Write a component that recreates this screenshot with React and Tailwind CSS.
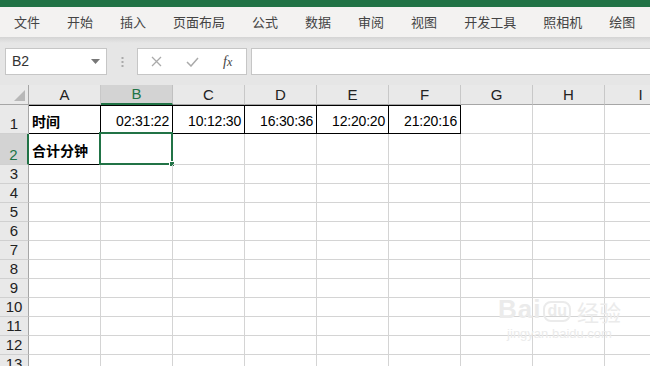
import React from 'react';

const menus = ['文件', '开始', '插入', '页面布局', '公式', '数据', '审阅', '视图', '开发工具', '照相机', '绘图'];
const cols = ['A', 'B', 'C', 'D', 'E', 'F', 'G', 'H', 'I'];
const times = ['02:31:22', '10:12:30', '16:30:36', '12:20:20', '21:20:16'];

// row heights in px (bottom gridline included)
const rowHeights = [29, 31, 19, 19, 19, 19, 19, 19, 19, 19, 19, 19, 19];

const cjk = { fontFamily: '"Noto Sans CJK SC", "Liberation Sans", sans-serif' };

const RowHeader = ({ n, h }) => {
  const sel = n === 2;
  return (
    <div
      className={`w-[29px] shrink-0 flex items-end justify-center border-b border-b-[#d0d0d0] border-r ${
        sel ? 'bg-[#d3d3d3] text-[#217346] border-r-[#217346] border-r-2' : 'bg-[#e9e9e9] text-[#222] border-r-[#a6a6a6]'
      } text-[15px] leading-[18px]`}
      style={{ height: h }}
    >
      {n}
    </div>
  );
};

const Cell = ({ r, c, h }) => {
  const boxed = (r === 1 && c <= 5) || (r === 2 && c === 0);
  let content = null;
  if (r === 1 && c === 0) content = <span className="font-bold text-[14px] pl-[3px]" style={cjk}>时间</span>;
  if (r === 2 && c === 0) content = <span className="font-bold text-[14px] pl-[3px]" style={cjk}>合计分钟</span>;
  if (r === 1 && c >= 1 && c <= 5) content = <span className="ml-auto pr-[3px] text-[14px] tracking-[-0.2px]">{times[c - 1]}</span>;
  return (
    <div
      className={`relative w-[72px] shrink-0 flex items-center pt-[3px] border-r border-b ${
        boxed ? 'border-black' : 'border-[#d4d4d4]'
      } ${r === 1 && c <= 5 ? 'border-t border-t-black' : ''}`}
      style={{ height: h }}
    >
      {content}
      {r === 2 && c === 1 && (
        <div className="absolute left-[-2px] top-[-2px] w-[74px] h-[33px] border-2 border-[#217346]">
          <div className="absolute right-[-4px] bottom-[-4px] w-[6px] h-[6px] bg-[#217346] border border-white" />
        </div>
      )}
    </div>
  );
};

export default function App() {
  return (
    <div className="w-[650px] h-[366px] overflow-hidden bg-white relative" style={{ fontFamily: '"Liberation Sans", "Noto Sans CJK SC", sans-serif' }}>
      {/* title strip */}
      <div className="h-[7px] bg-[#217346]" />

      {/* menu */}
      <div className="h-[30px] bg-[#f3f2f1] flex items-center gap-[27px] pl-[14px] text-[13px] text-[#444] whitespace-nowrap" style={cjk}>
        {menus.map((m) => (
          <span key={m}>{m}</span>
        ))}
      </div>

      {/* formula bar */}
      <div className="h-[48px] bg-[#e6e6e6] relative">
        <div className="h-[6px] bg-linear-to-b from-[#d4d4d4] to-[#e6e6e6]" />
        <div className="flex items-stretch pl-[5px] pt-[5px] h-[32px]">
          <div className="w-[102px] h-[27px] bg-white border border-[#c6c6c6] flex items-center justify-between pl-[6px] pr-[6px] text-[14px] text-[#333]">
            <span>B2</span>
            <svg width="9" height="5" viewBox="0 0 9 5"><path d="M0 0h9L4.5 5z" fill="#777" /></svg>
          </div>
          <div className="w-[30px] flex items-center justify-center">
            <svg width="3" height="10" viewBox="0 0 3 10">
              <rect x="0.5" y="0" width="2" height="2" fill="#aaa" />
              <rect x="0.5" y="4" width="2" height="2" fill="#aaa" />
              <rect x="0.5" y="8" width="2" height="2" fill="#aaa" />
            </svg>
          </div>
          <div className="w-[110px] h-[27px] bg-white border border-[#c6c6c6] flex items-center pl-[13px] text-[#999]">
            <svg width="11" height="11" viewBox="0 0 11 11"><path d="M1 1l9 9M10 1l-9 9" stroke="#aaa" strokeWidth="1.3" /></svg>
            <svg className="ml-[24px]" width="13" height="10" viewBox="0 0 13 10"><path d="M1 5l4 4 7-8" stroke="#aaa" strokeWidth="1.5" fill="none" /></svg>
            <span className="ml-[24px] italic text-[14px] text-[#444]" style={{ fontFamily: '"Liberation Serif", serif' }}>
              f<span className="text-[12px]">x</span>
            </span>
          </div>
          <div className="ml-[4px] flex-1 h-[27px] bg-white border border-[#c6c6c6] border-r-0" />
        </div>
      </div>

      {/* column headers */}
      <div className="flex h-[20px]">
        <div className="w-[29px] shrink-0 bg-[#e9e9e9] border-r border-b border-[#a6a6a6] relative">
          <svg className="absolute right-[3px] bottom-[3px]" width="11" height="11" viewBox="0 0 11 11"><path d="M11 0v11H0z" fill="#b8b8b8" /></svg>
        </div>
        {cols.map((c, i) => (
          <div
            key={c}
            className={`w-[72px] shrink-0 flex items-end justify-center text-[15px] leading-[18px] border-r ${
              i === 1 ? 'bg-[#d3d3d3] text-[#217346] border-b-2 border-b-[#217346] border-r-[#c0c0c0]' : 'bg-[#e9e9e9] text-[#222] border-b border-b-[#a6a6a6] border-r-[#c8c8c8]'
            }`}
          >
            {c}
          </div>
        ))}
      </div>

      {/* grid */}
      {rowHeights.map((h, ri) => (
        <div key={ri} className="flex">
          <RowHeader n={ri + 1} h={h} />
          {cols.map((c, ci) => (
            <Cell key={c} r={ri + 1} c={ci} h={h} />
          ))}
        </div>
      ))}

      {/* watermark */}
      <div className="absolute left-[498px] top-[296px] flex flex-col items-center text-[#ebebeb] pointer-events-none select-none">
        <div className="flex items-end gap-[2px]">
          <span className="text-[26px] font-bold leading-none tracking-[1px]">Bai</span>
          <span className="text-[16px] font-bold leading-none border-2 border-[#ebebeb] rounded-[8px] px-[2px] pb-[1px]">du</span>
          <span className="text-[22px] leading-none ml-[4px]" style={cjk}>经验</span>
        </div>
        <span className="text-[13px] leading-[18px] mt-[3px]">jingyan.baidu.com</span>
      </div>
    </div>
  );
}
